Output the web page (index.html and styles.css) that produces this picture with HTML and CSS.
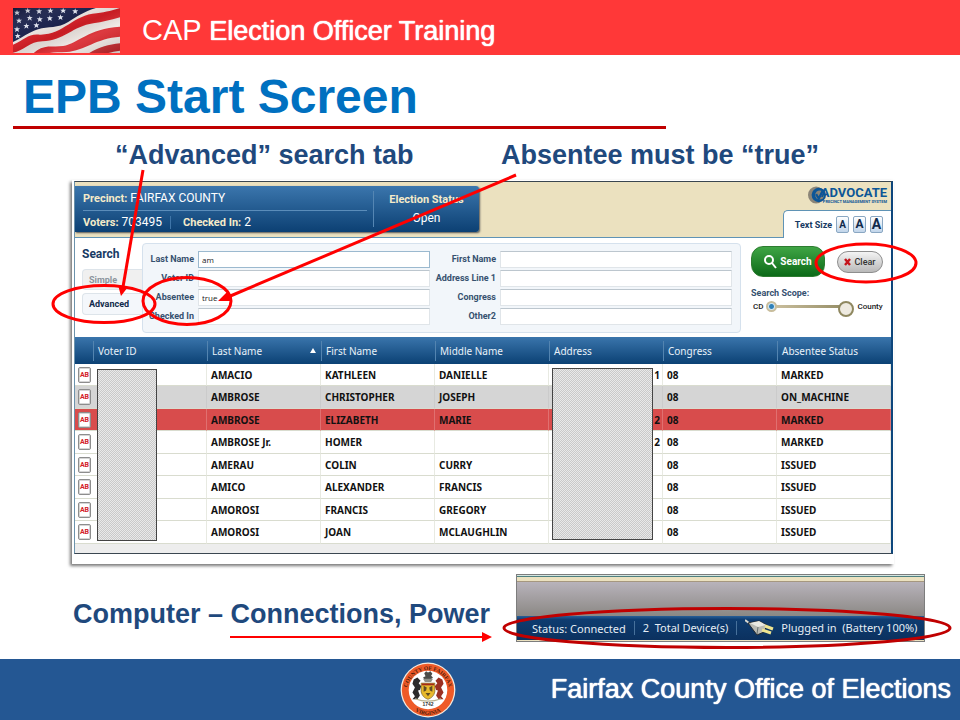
FILE: index.html
```html
<!DOCTYPE html>
<html lang="en">
<head>
<meta charset="utf-8">
<title>EPB Start Screen</title>
<link rel="stylesheet" href="styles.css">
</head>
<body>
<header class="banner">
  <svg class="flag" viewBox="0 0 320 135" preserveAspectRatio="none" aria-hidden="true">
    <defs>
      <linearGradient id="fold" x1="0" y1="0" x2="1" y2="1">
        <stop offset="0" stop-color="#000" stop-opacity=".25"/><stop offset=".3" stop-color="#fff" stop-opacity=".05"/>
        <stop offset=".5" stop-color="#000" stop-opacity=".08"/><stop offset=".68" stop-color="#fff" stop-opacity=".12"/>
        <stop offset="1" stop-color="#000" stop-opacity=".15"/>
      </linearGradient>
      <path id="star" d="M0-9L2-3H9L4 1L6 8L0 4L-6 8L-4 1L-9-3H-2z"/>
    </defs>
    <path fill="#eee6e2" d="M0 0H320V135H0z"/>
    <path fill="#d81f26" d="M0 110C35 96 45 76 80 80C150 82 180 20 250 16C280 12 300 6 320 0V28C290 36 268 42 240 46C180 54 150 100 88 100C50 100 30 130 0 134z"/>
    <path fill="#d81f26" d="M62 135C90 108 120 118 150 114C195 106 225 62 320 56V86C250 90 215 128 160 132C140 133 125 132 110 135z"/>
    <path fill="#c4242a" d="M228 135C260 116 285 110 320 106V128C305 130 295 132 285 135z"/>
    <path fill="#141c48" d="M0 0H248C215 10 190 26 165 42C135 62 105 54 75 64C45 74 30 88 0 102z"/>
    <g fill="#dfe2ee">
      <use href="#star" x="12" y="14"/><use href="#star" x="44" y="8"/><use href="#star" x="78" y="10"/><use href="#star" x="112" y="8"/><use href="#star" x="150" y="8"/><use href="#star" x="186" y="10"/>
      <use href="#star" x="18" y="38"/><use href="#star" x="50" y="30"/><use href="#star" x="80" y="34"/><use href="#star" x="110" y="31"/><use href="#star" x="142" y="28"/>
      <use href="#star" x="12" y="64"/><use href="#star" x="40" y="54"/><use href="#star" x="70" y="52"/><use href="#star" x="14" y="84"/>
    </g>
    <path fill="url(#fold)" d="M0 0H320V135H0z"/>
  </svg>
  <p class="banner-text"><span class="cap">CAP</span> Election Officer Training</p>
</header>

<main class="slide">
  <h1 class="title">EPB Start Screen</h1>
  <div class="callouts"><p class="callout">“Advanced” search tab</p><p class="callout">Absentee must be “true”</p></div>

  <section class="card">
    <div class="app">
      <div class="app-head">
        <div class="precinct">
          <div class="precinct-info">
            <p class="info-line"><b>Precinct:</b> FAIRFAX COUNTY</p>
            <p class="info-line second"><span><b>Voters:</b> 703495</span><span class="checked"><b>Checked In:</b> 2</span></p>
          </div>
          <div class="status"><b>Election Status</b><span>Open</span></div>
        </div>
        <div class="brand-side">
          <div class="brand">
            <svg class="brand-mark" viewBox="0 0 20 20" aria-hidden="true">
              <ellipse cx="9" cy="10" rx="9" ry="9.500" fill="#8b8578"/><circle cx="12" cy="10" r="8" fill="#0d5697"/><circle cx="13" cy="10" r="5" fill="#8b8578"/><path d="M9 9l3 5 5-10" fill="none" stroke="#0d5697" stroke-width="2.500"/>
            </svg>
            <div class="brand-words"><span class="brand-name">ADVOCATE</span><span class="brand-sub">PRECINCT MANAGEMENT SYSTEM</span></div>
          </div>
          <div class="text-size"><span>Text Size</span><button class="size-btn">A</button><button class="size-btn mid">A</button><button class="size-btn big">A</button></div>
        </div>
      </div>

      <form class="search">
        <div class="modes">
          <h2 class="modes-title">Search</h2>
          <button type="button" class="mode off">Simple</button>
          <button type="button" class="mode">Advanced</button>
        </div>
        <div class="fields">
          <label for="ln">Last Name</label><input id="ln" class="lit" value="am">
          <label for="fn">First Name</label><input id="fn">
          <label for="vid">Voter ID</label><input id="vid">
          <label for="ad">Address Line 1</label><input id="ad">
          <label for="ab">Absentee</label><input id="ab" value="true">
          <label for="cg">Congress</label><input id="cg">
          <label for="ci">Checked In</label><input id="ci">
          <label for="o2">Other2</label><input id="o2">
        </div>
        <div class="actions">
          <div class="buttons">
            <button type="button" class="go"><svg width="13" height="15" viewBox="0 0 13 15" aria-hidden="true"><circle cx="5" cy="6" r="4" fill="none" stroke="#fff" stroke-width="2"/><path d="M8 9l4 5" stroke="#fff" stroke-width="2"/></svg>Search</button>
            <button type="button" class="clear"><svg width="7" height="8" viewBox="0 0 7 8" aria-hidden="true"><path d="M1 1l5 6M6 1L1 7" stroke="#c4141c" stroke-width="2.400"/></svg>Clear</button>
          </div>
          <label class="scope-title" for="scope">Search Scope:</label>
          <div class="scope"><span>CD</span><span class="rail"><input id="scope" type="range" min="0" max="1" value="0"></span><span>County</span></div>
        </div>
      </form>

      <div class="results">
        <table>
          <colgroup><col class="c-icon"><col><col><col><col><col><col><col></colgroup>
          <thead><tr><th></th><th>Voter ID</th><th><span class="sorted">Last Name<i class="sort"></i></span></th><th>First Name</th><th>Middle Name</th><th>Address</th><th>Congress</th><th>Absentee Status</th></tr></thead>
          <tbody>
            <tr><td><span class="ab">AB</span></td><td></td><td>AMACIO</td><td>KATHLEEN</td><td>DANIELLE</td><td class="addr">: 1</td><td>08</td><td>MARKED</td></tr>
            <tr class="gray"><td><span class="ab">AB</span></td><td></td><td>AMBROSE</td><td>CHRISTOPHER</td><td>JOSEPH</td><td></td><td>08</td><td>ON_MACHINE</td></tr>
            <tr class="red"><td><span class="ab">AB</span></td><td></td><td>AMBROSE</td><td>ELIZABETH</td><td>MARIE</td><td class="addr">: 2</td><td>08</td><td>MARKED</td></tr>
            <tr><td><span class="ab">AB</span></td><td></td><td>AMBROSE Jr.</td><td>HOMER</td><td></td><td class="addr">: 2</td><td>08</td><td>MARKED</td></tr>
            <tr><td><span class="ab">AB</span></td><td></td><td>AMERAU</td><td>COLIN</td><td>CURRY</td><td></td><td>08</td><td>ISSUED</td></tr>
            <tr><td><span class="ab">AB</span></td><td></td><td>AMICO</td><td>ALEXANDER</td><td>FRANCIS</td><td></td><td>08</td><td>ISSUED</td></tr>
            <tr><td><span class="ab">AB</span></td><td></td><td>AMOROSI</td><td>FRANCIS</td><td>GREGORY</td><td></td><td>08</td><td>ISSUED</td></tr>
            <tr><td><span class="ab">AB</span></td><td></td><td>AMOROSI</td><td>JOAN</td><td>MCLAUGHLIN</td><td></td><td>08</td><td>ISSUED</td></tr>
          </tbody>
        </table>
        <div class="mask mask-id"></div>
        <div class="mask mask-address"></div>
      </div>
    </div>
  </section>

  <div class="power">
    <p class="callout">Computer – Connections, Power</p>
    <div class="device">
      <div class="device-top"></div>
      <div class="device-screen"></div>
      <div class="device-bar">
        <span>Status: Connected</span><span class="split">2&nbsp; Total Device(s)</span>
        <span class="split plug"><svg width="30" height="18" viewBox="0 0 30 18" aria-hidden="true"><path d="M0 1l4 3" stroke="#d8d8d0" stroke-width="2"/><path d="M3 4l11-2 8 4-3 7-7 3z" fill="#b9bab3" stroke="#22282e"/><path d="M5 4l9-2 7 4-8 2z" fill="#e9e9e2"/><path d="M20 7l8 3M17 11l9 3" stroke="#efe590" stroke-width="3"/><path d="M13 8l-1 7" stroke="#66706f"/></svg>Plugged in&nbsp; (Battery 100%)</span>
      </div>
    </div>
  </div>

  <svg class="marks" viewBox="0 0 960 604" preserveAspectRatio="none" aria-hidden="true">
    <g fill="none" stroke="#f00" stroke-width="3">
      <path d="M143 115L123 232"/><path d="M516 120L228 242"/>
      <ellipse cx="104" cy="249" rx="51" ry="18.500"/><ellipse cx="187" cy="246" rx="44" ry="23.500"/><ellipse cx="866" cy="208" rx="50" ry="19"/>
      <path stroke-width="2" d="M230 582H484"/>
      <ellipse cx="727" cy="573" rx="223" ry="19.500" stroke="#c00000"/>
    </g>
    <path fill="#f00" d="M121 241L118 230L128 232zM218 246L227 237L231 246zM492 582L482 577V587z"/>
  </svg>
</main>

<footer class="foot">
  <svg class="seal" viewBox="0 0 90 90" role="img" aria-label="County of Fairfax, Virginia seal">
    <defs><path id="ring-top" d="M11 47A34 34 0 0 1 79 47"/><path id="ring-low" d="M5 45A40 40 0 0 0 85 45"/></defs>
    <circle cx="45" cy="45" r="44" fill="#f3ece2"/><circle cx="45" cy="45" r="42" fill="#ee5a28"/><circle cx="45" cy="45" r="31" fill="#fff"/>
    <text class="seal-text"><textPath href="#ring-top" startOffset="50%">COUNTY OF FAIRFAX</textPath></text>
    <text class="seal-text"><textPath href="#ring-low" startOffset="50%">VIRGINIA</textPath></text>
    <path fill="#4b4c48" d="M39 18l3-3 3 2 4-2 3 4-2 3 3 3-5 4h-8l-3-4 4-2z"/><path fill="#8e8f88" d="M37 27h16l-3 5H40z"/>
    <path fill="#e8b92d" stroke="#6a5012" d="M34 34h22v14q-2 9-11 12q-9-3-11-12z"/><path fill="#5f4b25" d="M38 38l5 3-1 5-4 2zM52 38l-5 3 1 5 4 2zM41 50h8l-4 5z"/><path stroke="#a42b1a" stroke-width="3" d="M35 36h20"/>
    <path fill="#2b2a2a" d="M22 28l6-3 5 5-3 4 4 5-2 6-3 1 3 8-4 6h-8l4-5-4-6 4-8-4-6z"/>
    <path fill="#9a3022" d="M68 28l-6-3-5 5 3 4-4 5 2 6 3 1-3 8 4 6h8l-4-5 4-6-4-8 4-6z"/>
    <path fill="none" stroke="#b9b28e" stroke-width="2" d="M24 59q21 8 42 0"/>
    <text x="45" y="71" text-anchor="middle" font-size="8" font-weight="bold" fill="#333">1742</text>
  </svg>
  <p class="foot-text">Fairfax County Office of Elections</p>
</footer>
</body>
</html>
```
FILE: styles.css
```css
* { box-sizing: border-box; }
body { margin: 0; min-height: 100vh; display: flex; flex-direction: column; background: #fff; font-family: "Liberation Sans", Arial, sans-serif; }
p, h1, h2 { margin: 0; }
button, input { font: inherit; margin: 0; padding: 0; }

.banner { display: flex; align-items: center; height: 55px; padding: 6px 13px 0; gap: 22px; background: #ff3838; color: #fff; }
.flag { width: 107px; height: 45px; flex: none; }
.banner-text { font-size: 27px; text-shadow: 0 0 1px #fff, 0 0 1px #fff; }
.cap { font-size: 29px; text-shadow: none; }

.slide { position: relative; flex: 1; }
.title { width: 68%; margin-left: 13px; padding: 12px 0 0 10px; border-bottom: 3px solid #c00000; font-size: 48px; line-height: 59px; color: #0070c0; white-space: nowrap; }
.callouts { display: flex; justify-content: space-between; padding: 10px 141px 9px 115px; }
.callout { font-size: 27px; line-height: 32px; font-weight: bold; color: #1f497d; white-space: nowrap; }

.card { margin: 0 66px 0 72px; padding: 1px 1px 10px 2px; background: #fff; box-shadow: -2px 2px 3px #777; font-family: Roboto, "Liberation Sans", sans-serif; }
.app { border: 1px solid #3a4650; border-left-color: #6c93ad; border-right: 2px solid #0d467c; background: #fff; color: #173a63; }
.app-head { display: flex; justify-content: space-between; height: 56px; background: #ebe1bf; border-bottom: 1px solid #5f93b5; }
.precinct { display: flex; align-items: stretch; width: 404px; margin: 4px 0 5px; padding: 0 0 0 8px; border-radius: 0 3px 3px 0; background: linear-gradient(#3b76ad, #0c4073); box-shadow: 1px 1px 2px #555; color: #fff; font-size: 12px; line-height: 22px; }
.precinct b { color: #f5ebc9; font-size: 11px; }
.precinct-info { flex: 1; margin: 1px 6px 1px 0; }
.second { border-top: 1px solid #5b8dba; display: flex; }
.checked { margin-left: 8px; padding-left: 12px; border-left: 1px solid #3f75a8; line-height: 12px; align-self: center; }
.status { width: 106px; margin: 5px 0; border-left: 1px solid #5586b3; text-align: center; display: flex; flex-direction: column; line-height: 18px; }
.brand-side { display: flex; flex-direction: column; align-items: flex-end; justify-content: space-between; }
.brand { display: flex; align-items: center; padding: 3px 4px 0 0; }
.brand-mark { width: 18px; height: 20px; margin-right: -5px; }
.brand-words { position: relative; display: flex; flex-direction: column; color: #0d5697; font-weight: bold; }
.brand-name { font-size: 13px; line-height: 13px; }
.brand-sub { font-size: 4px; line-height: 6px; text-align: right; }
.text-size { display: flex; align-items: center; gap: 4px; height: 28px; margin-bottom: -1px; padding: 0 8px 0 11px; background: #fff; border: 1px solid #5f93b5; border-width: 1px 0 0 1px; border-radius: 5px 0 0; font-size: 9px; font-weight: bold; }
.size-btn { width: 13px; height: 17px; border: 1px solid #8aa7c2; border-radius: 2px; background: linear-gradient(#fff, #c1d5ea); color: #102a4b; font-size: 10px; line-height: 15px; }
.mid { font-size: 12px; }
.big { font-size: 14px; }

.search { display: flex; padding: 5px 0 4px; height: 99px; }
.modes { display: flex; flex-direction: column; width: 67px; padding-left: 7px; }
.modes-title { font-size: 12px; line-height: 22px; margin-bottom: 4px; }
.mode { height: 22px; margin-bottom: 3px; padding-left: 6px; border: 1px solid #dde4ea; border-right: 0; border-radius: 4px 0 0 4px; background: #f4f7fb; color: #102a4b; font-size: 9px; font-weight: bold; text-align: left; }
.off { height: 21px; background: #f0f0f0; color: #8b949c; }
.fields { flex: 1; display: grid; grid-template-columns: 51px 1fr 62px 1fr; column-gap: 4px; row-gap: 2px; align-content: start; padding: 7px 8px 0 0; border: 1px solid #d5e1ed; border-radius: 4px; background: #f2f6fa; }
.fields label { font-size: 9px; line-height: 17px; font-weight: bold; text-align: right; white-space: nowrap; color: #36516f; }
.fields input { width: 100%; min-width: 0; height: 17px; padding: 0 3px; border: 1px solid #e0e5e9; border-top-color: #bcc6ce; background: #fff; color: #222; font-family: "Open Sans", sans-serif; font-size: 8px; }
.fields .lit { border-color: #9bb9cf; }
.actions { width: 150px; padding: 3px 0 0 10px; }
.buttons { display: flex; align-items: center; gap: 12px; height: 31px; }
.go, .clear { display: flex; align-items: center; justify-content: center; border-radius: 12px; font-weight: bold; }
.go { width: 74px; height: 31px; gap: 3px; border: 1px solid #2d7c30; background: linear-gradient(#3fa545, #0c6a18); color: #fff; font-size: 10px; }
.clear { width: 46px; height: 22px; gap: 3px; border: 1px solid #8e8e8e; background: linear-gradient(#f4f4f4, #b9b9b9); color: #333; font-size: 9px; font-weight: 500; }
.scope-title { display: block; margin-top: 9px; font-size: 9px; line-height: 14px; font-weight: bold; color: #36516f; }
.scope { display: flex; align-items: center; gap: 3px; padding-left: 2px; font-size: 8px; line-height: 13px; color: #222; font-weight: 500; }
.rail { position: relative; display: flex; width: 88px; }
.rail::after { content: ""; position: absolute; right: 0; top: 0; width: 12px; height: 12px; border: 2px solid #8f8860; border-radius: 50%; background: #eeeae0; }
.rail input { appearance: none; width: 100%; height: 12px; background: linear-gradient(90deg, #cfc3a2, #8f8860) center / 84px 3px no-repeat; }
.rail input::-webkit-slider-thumb { appearance: none; width: 11px; height: 11px; border: 2px solid #c8bd9c; border-radius: 50%; background: radial-gradient(#2f80b8 40%, #cfe6f5 60%); }

.results { position: relative; padding-bottom: 9px; background: #ededed; font-family: "Noto Sans", "Open Sans", sans-serif; }
table { width: 100%; table-layout: fixed; border-collapse: separate; border-spacing: 0; background: #fff; }
.c-icon { width: 18px; }
th { height: 27px; padding: 0 0 0 5px; background: linear-gradient(90deg, #5384b0, #5384b0) left center / 1px 20px no-repeat, linear-gradient(#3a75ac, #0b4174); color: #e8f1f9; font-family: "Noto Sans", sans-serif; font-size: 10px; font-weight: normal; text-align: left; white-space: nowrap; }
th:first-child { background: linear-gradient(#3a75ac, #0b4174); }
.sorted { display: flex; justify-content: space-between; align-items: center; padding-right: 5px; }
.sort { border: 3px solid transparent; border-top: 0; border-bottom: 5px solid #fff; }
td { height: 22px; padding: 0 0 0 4px; border-bottom: 1px solid #d9dccf; border-right: 1px solid #e8eae2; color: #111; font-size: 10px; line-height: 14px; font-weight: bold; white-space: nowrap; overflow: hidden; }
tr:nth-child(even) td { height: 23px; }
td:first-child { padding: 0 0 0 3px; border-right: 0; }
td.addr { text-align: right; padding-right: 2px; }
.gray td { background: #d5d5d5; border-right-color: #cbcbcb; }
.red td { background: #d84c4c; border-right-color: #e07070; }
.ab { display: block; width: 13px; height: 16px; border: 1px solid #8d8d8d; border-radius: 2px; box-shadow: inset 0 0 0 1px #d6d6d6; background: #fff; color: #d3202a; font-family: Roboto, "Liberation Sans", sans-serif; font-size: 7px; line-height: 14px; text-align: center; }
.mask { position: absolute; border: 1px solid #444; background: repeating-conic-gradient(#c9c9c9 0 25%, #e9e9e9 0 50%) 0 0 / 2px 2px; height: 172px; }
.mask-id { left: 22px; top: 32px; width: 60px; }
.mask-address { left: 58.500%; top: 31px; width: 101px; }

.power { display: flex; align-items: center; justify-content: space-between; padding: 10px 35px 16px 73px; }
.power .callout { padding-top: 12px; }
.device { width: 409px; border: 1px solid #7d7d7d; background: #ebe1bf; padding-bottom: 1px; font-family: "Noto Sans", "Open Sans", sans-serif; }
.device-top { height: 7px; border-top: 1px solid #d5e5e0; border-bottom: 1px solid #a5977f; box-shadow: inset 0 1px #4f8080; }
.device-screen { height: 34px; background: linear-gradient(#b8b3bb, #8b8884); }
.device-bar { display: flex; align-items: center; height: 24px; padding-left: 15px; background: linear-gradient(#285f98, #0e3c70 15%, #0b315f); color: #e6eef5; font-size: 11px; white-space: nowrap; }
.split { margin-left: 8px; padding-left: 8px; border-left: 1px solid #47719b; line-height: 14px; }
.plug { display: flex; align-items: center; gap: 6px; height: 14px; }
.marks { position: absolute; inset: 0; width: 100%; height: 100%; pointer-events: none; }

.foot { display: grid; grid-template-columns: 400px 56px 1fr; align-items: center; height: 61px; padding-right: 9px; background: #245793; color: #fff; }
.seal { grid-column: 2; width: 56px; height: 56px; }
.seal-text { font-family: "Liberation Serif", serif; font-size: 9px; font-weight: bold; fill: #51200c; text-anchor: middle; }
.foot-text { font-size: 27px; text-align: right; white-space: nowrap; text-shadow: 0 0 1px #fff, 0 0 1px #fff; }
```
